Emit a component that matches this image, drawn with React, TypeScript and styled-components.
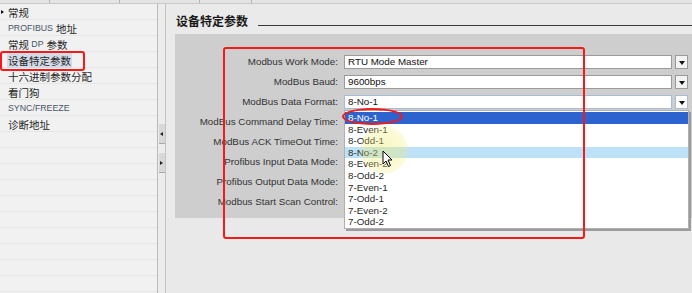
import React from "react";
import styled, { createGlobalStyle } from "styled-components";

const Global = createGlobalStyle`
  html, body { margin: 0; padding: 0; background: #eaeaea; }
  body { font-family: "Liberation Sans", Arial, sans-serif; }
`;

const Root = styled.div`
  position: relative;
  width: 692px;
  height: 293px;
  overflow: hidden;
  display: flex;
  flex-direction: column;
  background: #eaeaea;
`;

const TabStrip = styled.div`
  height: 4px;
  display: flex;
  background: #e4e4e4;
  border-bottom: 1px solid #c9c9c9;
  box-sizing: border-box;
`;

const Tab = styled.div<{ $w: number }>`
  width: ${(p) => p.$w}px;
  border-right: 1px solid #b5b5b5;
  box-sizing: border-box;
`;

const Body = styled.div`
  flex: 1;
  display: flex;
  min-height: 0;
`;

const LeftPanel = styled.div`
  width: 157px;
  background-color: #f1f1f1;
  background-image: repeating-linear-gradient(
    to bottom,
    transparent 0,
    transparent 15px,
    #e6e6e6 15px,
    #e6e6e6 16px
  );
  display: flex;
  flex-direction: column;
`;

const NavItem = styled.div`
  height: 16px;
  display: flex;
  align-items: center;
  padding-left: 8px;
  position: relative;
  font-family: "Noto Sans CJK SC", "Liberation Sans", sans-serif;
  font-size: 10.5px;
  color: #262626;
  white-space: nowrap;
`;

const Latin = styled.span`
  font-family: "Liberation Sans", Arial, sans-serif;
  font-size: 8.8px;
  color: #4b5566;
  margin-right: 3px;
`;

const Selected = styled.span`
  background: #d3dbe6;
  padding: 0 1px;
  margin-left: -1px;
`;

const Bullet = styled.span`
  position: absolute;
  left: 1px;
  top: 6px;
  width: 0;
  height: 0;
  border-top: 2px solid transparent;
  border-bottom: 2px solid transparent;
  border-left: 3px solid #111;
`;

const Splitter = styled.div`
  width: 9px;
  box-sizing: border-box;
  border-left: 1px solid #b9b9b9;
  border-right: 1px solid #c4c4c4;
  background: #ececec;
  display: flex;
  flex-direction: column;
  align-items: center;
  padding-top: 120px;
  gap: 9px;
`;

const SplitBtn = styled.div`
  width: 6px;
  height: 19px;
  background: #d8d8d8;
  border-bottom: 1px solid #a8a8a8;
  display: flex;
  align-items: center;
  justify-content: center;
`;

const Arrow = styled.span<{ $dir: "left" | "right" }>`
  width: 0;
  height: 0;
  border-top: 2px solid transparent;
  border-bottom: 2px solid transparent;
  ${(p) =>
    p.$dir === "left"
      ? "border-right: 3px solid #222;"
      : "border-left: 3px solid #222;"}
`;

const Main = styled.div`
  flex: 1;
  display: flex;
  flex-direction: column;
  min-width: 0;
`;

const TitleRow = styled.div`
  height: 30px;
  display: flex;
  align-items: center;
  padding-left: 10px;
  box-sizing: border-box;
`;

const Title = styled.div`
  font-family: "Noto Sans CJK SC", sans-serif;
  font-weight: bold;
  font-size: 12px;
  color: #1a1a1a;
  margin-top: 3px;
`;

const TitleLine = styled.div`
  flex: 1;
  height: 0;
  border-top: 1px solid #3a3a3a;
  margin-left: 10px;
  margin-top: 12px;
`;

const FormPanel = styled.div`
  position: relative;
  margin-left: 9px;
  height: 184px;
  background: #cecece;
  padding: 21px 4px 0 0;
  box-sizing: border-box;
  display: grid;
  grid-template-columns: 163px 1fr;
  grid-auto-rows: 20px;
  column-gap: 6px;
  align-items: start;
`;

const Label = styled.div`
  text-align: right;
  font-size: 9.8px;
  line-height: 14px;
  color: #333;
  white-space: nowrap;
`;

const Field = styled.div`
  display: flex;
  gap: 3px;
  height: 14px;
`;

const Input = styled.div<{ $active?: boolean }>`
  flex: 1;
  background: #fff;
  border: 1px solid ${(p) => (p.$active ? "#a7bcd8" : "#9a9a9a")};
  box-sizing: border-box;
  font-size: 9.8px;
  line-height: 12px;
  padding-left: 3px;
  color: #111;
  white-space: nowrap;
`;

const DropBtn = styled.div<{ $active?: boolean }>`
  width: 13px;
  background: ${(p) => (p.$active ? "#fff" : "#f3f3f3")};
  border: 1px solid ${(p) => (p.$active ? "#a7bcd8" : "#9a9a9a")};
  box-sizing: border-box;
  display: flex;
  align-items: center;
  justify-content: center;
`;

const Tri = styled.span`
  width: 0;
  height: 0;
  border-left: 3px solid transparent;
  border-right: 3px solid transparent;
  border-top: 4px solid #111;
  margin-top: 1px;
`;

const Bottom = styled.div`
  flex: 1;
  background: #e9e9e9;
`;

const DropList = styled.div`
  position: absolute;
  left: 169px;
  top: 76px;
  width: 345px;
  background: #fff;
  border: 1px solid #b0b0b0;
  box-shadow: 2px 2px 0 #9b9b9b;
  box-sizing: border-box;
  padding-top: 1px;
  display: flex;
  flex-direction: column;
`;

const Option = styled.div<{ $state?: "sel" | "hover" }>`
  height: 11.6px;
  line-height: 11.6px;
  font-size: 9.8px;
  padding-left: 3px;
  color: ${(p) => (p.$state === "sel" ? "#fff" : "#2a2a2a")};
  background: ${(p) =>
    p.$state === "sel" ? "#2c63cf" : p.$state === "hover" ? "#bde1f6" : "transparent"};
`;

const Halo = styled.div`
  position: absolute;
  left: 360px;
  top: 126px;
  width: 48px;
  height: 48px;
  border-radius: 50%;
  background: radial-gradient(circle, rgba(240, 236, 110, 0.42) 0%, rgba(240, 236, 110, 0.3) 55%, rgba(240, 236, 110, 0) 100%);
  pointer-events: none;
`;

const Pointer = styled.svg`
  position: absolute;
  left: 382px;
  top: 150px;
`;

const RedBox = styled.div<{ $l: number; $t: number; $w: number; $h: number; $r: number }>`
  position: absolute;
  left: ${(p) => p.$l}px;
  top: ${(p) => p.$t}px;
  width: ${(p) => p.$w}px;
  height: ${(p) => p.$h}px;
  border: 2.5px solid #f41a1a;
  border-radius: ${(p) => p.$r}px;
  box-sizing: border-box;
  pointer-events: none;
`;

const RedEllipse = styled.div`
  position: absolute;
  left: 342px;
  top: 108px;
  width: 61px;
  height: 17px;
  border: 2.5px solid #f41a1a;
  border-radius: 50%;
  box-sizing: border-box;
`;

const rows: { label: string; value: string; active?: boolean }[] = [
  { label: "Modbus Work Mode:", value: "RTU Mode Master" },
  { label: "ModBus Baud:", value: "9600bps" },
  { label: "ModBus Data Format:", value: "8-No-1", active: true },
  { label: "ModBus Command Delay Time:", value: "" },
  { label: "ModBus ACK TimeOut Time:", value: "" },
  { label: "Profibus Input Data Mode:", value: "" },
  { label: "Profibus Output Data Mode:", value: "" },
  { label: "Modbus Start Scan Control:", value: "" },
];

const options = [
  "8-No-1",
  "8-Even-1",
  "8-Odd-1",
  "8-No-2",
  "8-Even-2",
  "8-Odd-2",
  "7-Even-1",
  "7-Odd-1",
  "7-Even-2",
  "7-Odd-2",
];

export default function App() {
  return (
    <>
      <Global />
      <Root>
        <TabStrip>
          <Tab $w={50} />
          <Tab $w={70} />
          <Tab $w={80} />
          <Tab $w={52} />
        </TabStrip>
        <Body>
          <LeftPanel>
            <NavItem>
              <Bullet />
              常规
            </NavItem>
            <NavItem>
              <Latin>PROFIBUS</Latin>地址
            </NavItem>
            <NavItem>
              常规&nbsp;<Latin>DP</Latin>参数
            </NavItem>
            <NavItem>
              <Selected>设备特定参数</Selected>
            </NavItem>
            <NavItem>十六进制参数分配</NavItem>
            <NavItem>看门狗</NavItem>
            <NavItem>
              <Latin>SYNC/FREEZE</Latin>
            </NavItem>
            <NavItem>诊断地址</NavItem>
          </LeftPanel>
          <Splitter>
            <SplitBtn>
              <Arrow $dir="left" />
            </SplitBtn>
            <SplitBtn>
              <Arrow $dir="right" />
            </SplitBtn>
          </Splitter>
          <Main>
            <TitleRow>
              <Title>设备特定参数</Title>
              <TitleLine />
            </TitleRow>
            <FormPanel>
              {rows.map((r) => (
                <React.Fragment key={r.label}>
                  <Label>{r.label}</Label>
                  <Field>
                    <Input $active={r.active}>{r.value}</Input>
                    <DropBtn $active={r.active}>
                      <Tri />
                    </DropBtn>
                  </Field>
                </React.Fragment>
              ))}
              <DropList>
                {options.map((o, i) => (
                  <Option key={o} $state={i === 0 ? "sel" : i === 3 ? "hover" : undefined}>
                    {o}
                  </Option>
                ))}
              </DropList>
            </FormPanel>
            <Bottom />
          </Main>
        </Body>
        <Halo />
        <Pointer width="12" height="18" viewBox="0 0 12 18">
          <path d="M1 1 L1 14 L4 11 L6.5 16.5 L8.5 15.5 L6 10 L10 10 Z" fill="#fff" stroke="#000" strokeWidth="1" strokeLinejoin="round" />
        </Pointer>
        <RedBox $l={223} $t={47} $w={362} $h={192} $r={3} />
        <RedBox $l={0} $t={51} $w={85} $h={20} $r={3} />
        <RedEllipse />
      </Root>
    </>
  );
}
